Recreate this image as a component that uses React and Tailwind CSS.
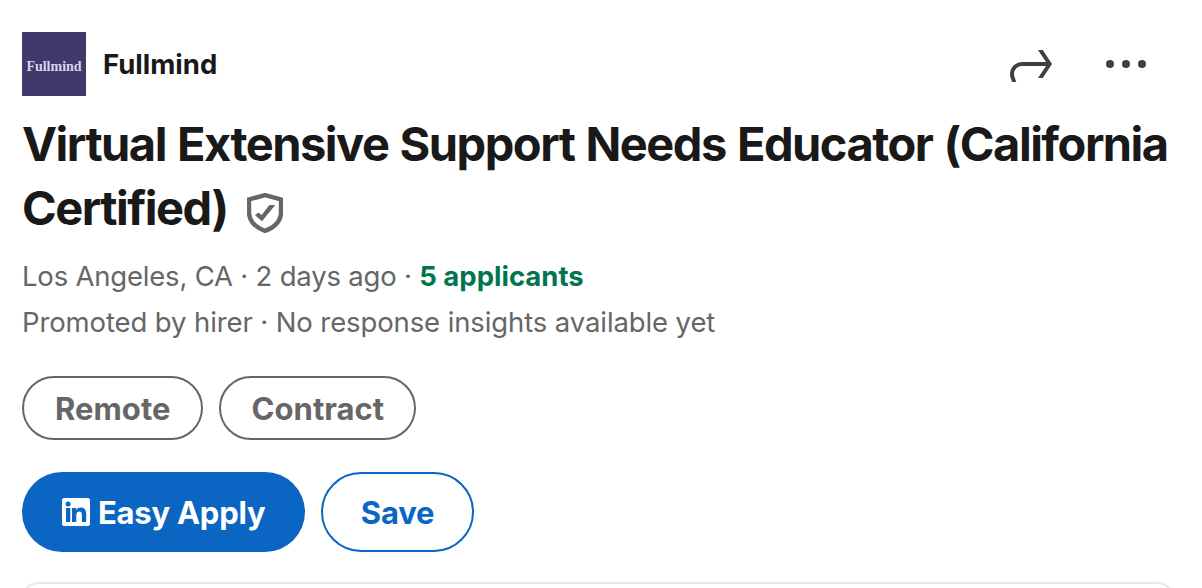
const tags = ["Remote", "Contract"];

function ShareIcon() {
  return (
    <svg width="48" height="48" viewBox="0 0 24 24" fill="currentColor" aria-hidden="true">
      <path d="M23 12l-4.61 7H16l4-6H8a3.92 3.92 0 00-4 3.84V17a4 4 0 00.19 1.24L5.12 21H3l-.73-2.22A6.4 6.4 0 012 16.94 6 6 0 018 11h12l-4-6h2.39z" />
    </svg>
  );
}

function MoreIcon() {
  return (
    <svg width="48" height="48" viewBox="0 0 24 24" fill="currentColor" aria-hidden="true">
      <circle cx="4" cy="12" r="2" />
      <circle cx="12" cy="12" r="2" />
      <circle cx="20" cy="12" r="2" />
    </svg>
  );
}

function VerifiedIcon() {
  return (
    <svg className="mt-[17px] text-[#666666]" width="36" height="40" viewBox="0 0 36 40" aria-hidden="true">
      <path
        d="M18 2.1L34 6.5V19c0 8.600-5.800 15-16 18.900C7.800 34 2 27.600 2 19V6.500z"
        fill="none"
        stroke="currentColor"
        strokeWidth="4.4"
      />
      <path d="M22.300 12h6L15 28.300 8 22.300l3.300-2.800 3.400 2.500z" fill="currentColor" />
    </svg>
  );
}

function LinkedInBug() {
  return (
    <svg width="28" height="28" viewBox="0 0 28 28" fill="currentColor" aria-hidden="true">
      <path
        fillRule="evenodd"
        d="M26 0H2a2 2 0 00-2 2v24a2 2 0 002 2h24a2 2 0 002-2V2a2 2 0 00-2-2zM8.300 24H4V10h4.300zM6.100 8.500a2.500 2.500 0 110-5 2.500 2.500 0 010 5zM24.200 24h-4.300v-6.600c0-2.600-.6-4-2.400-4-2.100 0-3.200 1.600-3.200 4V24H10V10h4.100v1.900a5.400 5.400 0 014.700-2.300c3.300 0 5.400 2 5.400 6.200z"
      />
    </svg>
  );
}

export default function App() {
  return (
    <div className="h-[588px] w-[1202px] overflow-hidden bg-white pl-[22px] pr-[28px] pt-8 font-['Inter',sans-serif]">
      <header className="mr-6 flex h-16 items-center justify-between">
        <div className="flex items-center">
          <div className="flex size-16 items-center justify-center bg-[#41386b] pt-1 font-['Liberation_Serif',serif] text-[14px] font-bold text-[#d9d5e6]">
            Fullmind
          </div>
          <span className="ml-[17px] pt-px text-[27.5px] font-bold text-[#191919]">Fullmind</span>
        </div>
        <div className="flex gap-12 text-[#404040]">
          <button aria-label="Share"><ShareIcon /></button>
          <button aria-label="More options"><MoreIcon /></button>
        </div>
      </header>

      <h1 className="mt-4 text-[47px] leading-[64px] font-bold tracking-[-1.5px] [word-spacing:1.5px] whitespace-nowrap text-[#191919]">
        <span className="block">Virtual Extensive Support Needs Educator (California</span>
        <span className="flex h-16 items-start">
          <span className="w-[225px]">Certified)</span>
          <VerifiedIcon />
        </span>
      </h1>

      <div className="mt-[13px] text-[27.5px] leading-[46px] whitespace-nowrap text-[#666666]">
        <p>
          <span className="tracking-[-0.2px]">Los Angeles, CA · 2 days ago · </span>
          <span className="font-bold text-[#01754f]">5 applicants</span>
        </p>
        <p className="tracking-[-0.11px]">Promoted by hirer · No response insights available yet</p>
      </div>

      <div className="mt-[31px] flex gap-4">
        {tags.map((tag) => (
          <span
            key={tag}
            className="flex h-16 items-center rounded-full border-2 border-[#666666] pt-0.5 pr-[30px] pl-[31px] text-[31px] font-bold tracking-[0.04px] text-[#666666]"
          >
            {tag}
          </span>
        ))}
      </div>

      <div className="mt-8 flex gap-4 text-[31px] font-bold tracking-[-0.25px]">
        <button className="flex h-20 w-[283px] items-center gap-2 rounded-full bg-[#0a66c2] pl-10 text-white">
          <LinkedInBug />
          <span className="pt-0.5">Easy Apply</span>
        </button>
        <button className="h-20 w-[153px] rounded-full border-2 border-[#0a66c2] pt-0.5 text-[#0a66c2]">Save</button>
      </div>

      <div className="mt-[30px] h-20 rounded-2xl border-2 border-[#e8e8e8]" />
    </div>
  );
}
